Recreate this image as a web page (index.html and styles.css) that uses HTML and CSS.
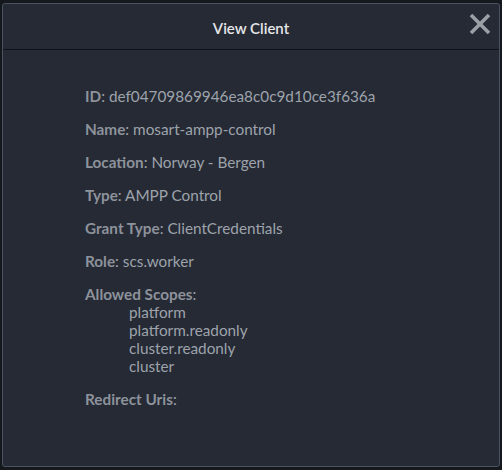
FILE: index.html
```html
<!DOCTYPE html>
<html>
<head>
<meta charset="utf-8">
<link rel="stylesheet" href="styles.css">
</head>
<body>
<div class="modal">
  <div class="header">
    <div class="title">View Client</div>
    <button class="close" aria-label="Close">
      <svg width="22" height="22" viewBox="0 0 22 22"><path d="M2 2 L20 20 M20 2 L2 20" stroke="#9b9fa6" stroke-width="3.6" stroke-linecap="butt"/></svg>
    </button>
  </div>
  <div class="body">
    <div class="row"><span class="label">ID</span>: def04709869946ea8c0c9d10ce3f636a</div>
    <div class="row"><span class="label">Name</span>: mosart-ampp-control</div>
    <div class="row"><span class="label">Location</span>: Norway - Bergen</div>
    <div class="row"><span class="label">Type</span>: AMPP Control</div>
    <div class="row"><span class="label">Grant Type</span>: ClientCredentials</div>
    <div class="row"><span class="label">Role</span>: scs.worker</div>
    <div class="row">
      <span class="label">Allowed Scopes</span>:
      <ul class="scopes">
        <li>platform</li>
        <li>platform.readonly</li>
        <li>cluster.readonly</li>
        <li>cluster</li>
      </ul>
    </div>
    <div class="row"><span class="label">Redirect Uris</span>:</div>
  </div>
</div>
</body>
</html>
```
FILE: styles.css
```css
html, body {
  margin: 0;
  padding: 0;
  background: #15181c;
  font-family: Lato, "Open Sans", sans-serif;
}
body {
  padding: 3px 0 0 2px;
}
.modal {
  box-sizing: border-box;
  width: 498px;
  height: 464px;
  background: #252a35;
  border: 1px solid #4a5160;
  border-radius: 3px;
  display: flex;
  flex-direction: column;
}
.header {
  position: relative;
  height: 45px;
  border-bottom: 1px solid #10141a;
  display: flex;
  align-items: center;
  justify-content: center;
}
.title {
  color: #e6e7e9;
  font-size: 15px;
  font-weight: 600;
  padding-top: 3px;
}
.close {
  position: absolute;
  right: 8px;
  top: 9px;
  background: none;
  border: 0;
  padding: 0;
  width: 22px;
  height: 22px;
  cursor: pointer;
}
.close svg { display: block; }
.body {
  padding: 37px 0 0 82px;
  display: flex;
  flex-direction: column;
  gap: 15px;
  color: #9ea3ab;
  font-size: 15.3px;
  line-height: 18px;
}
.label {
  font-weight: 700;
  color: #8d929b;
}
.scopes {
  list-style: none;
  margin: 0;
  padding: 0 0 0 44px;
}
```
